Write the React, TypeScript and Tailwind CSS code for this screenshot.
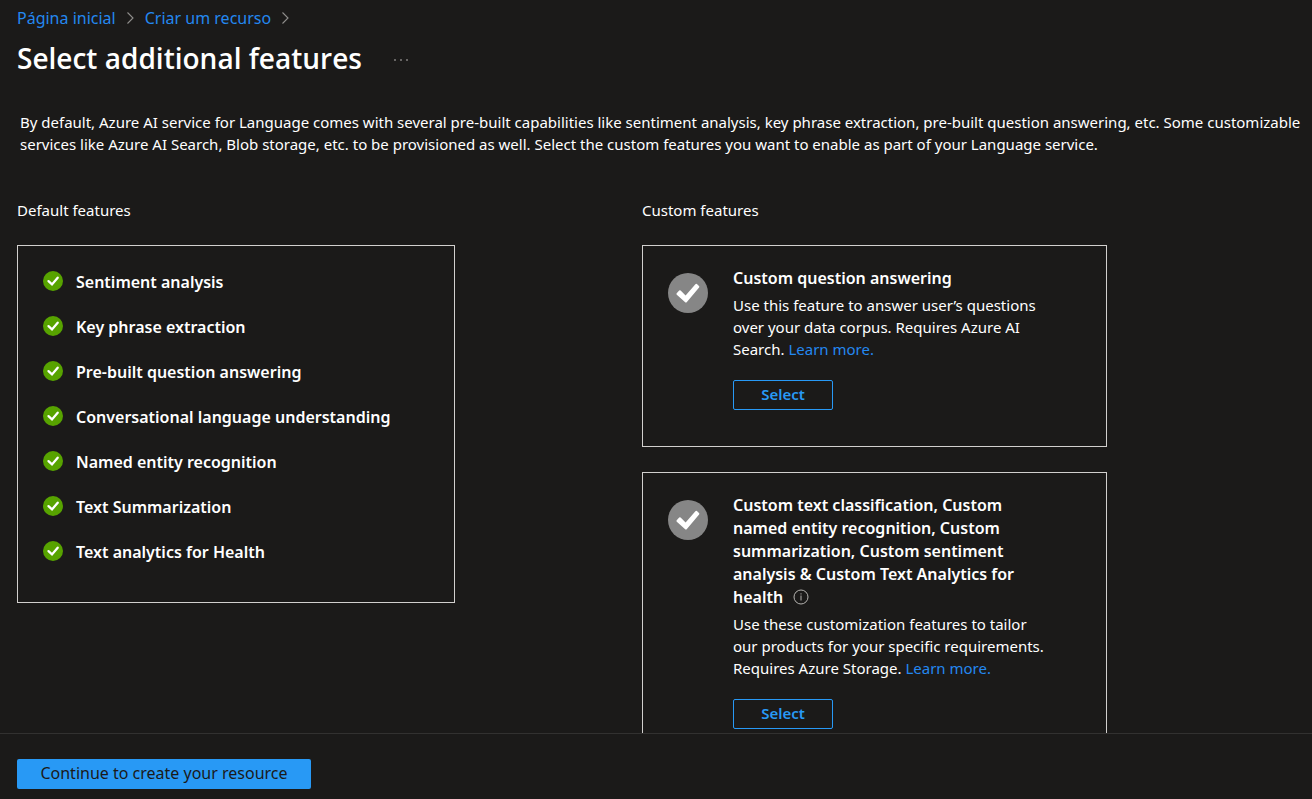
import type { ReactNode } from "react";

const defaultFeatures = [
  "Sentiment analysis",
  "Key phrase extraction",
  "Pre-built question answering",
  "Conversational language understanding",
  "Named entity recognition",
  "Text Summarization",
  "Text analytics for Health",
];

function Chevron() {
  return (
    <svg aria-hidden="true" viewBox="0 0 7 12" className="h-3 w-[7px] shrink-0" fill="none" stroke="#8f8e8c" strokeWidth="1.1">
      <path d="M.5.5 6 6 .5 11.5" />
    </svg>
  );
}

function GreenCheck() {
  return (
    <svg aria-hidden="true" viewBox="0 0 20 20" className="mt-px size-5 shrink-0">
      <circle cx="10" cy="10" r="10" fill="#57a300" />
      <path d="M5.5 10.1 9 13.4 14.7 6.7" fill="none" stroke="#fff" strokeWidth="2.3" strokeLinecap="round" />
    </svg>
  );
}

function GrayCheck() {
  return (
    <svg aria-hidden="true" viewBox="0 0 40 40" className="size-10 shrink-0">
      <circle cx="20" cy="20" r="20" fill="#868686" />
      <path
        d="M8.7 20.3 11.2 17.6Q11.9 17 12.6 17.6L17.6 22.6 27.4 11.2Q28.1 10.4 28.9 11.1L31 13Q31.7 13.6 31.1 14.4L18.9 29.1Q17.9 30.1 16.9 29.1L8.8 21.7Q8 21 8.7 20.3Z"
        fill="#fff"
      />
    </svg>
  );
}

function InfoIcon() {
  return (
    <svg aria-hidden="true" viewBox="0 0 16 16" className="size-4" fill="none" stroke="#b5b3b0">
      <circle cx="8" cy="8" r="7" />
      <path d="M8 6.5v5M8 4.3v1.2" />
    </svg>
  );
}

function FeatureCard({ title, children }: { title: ReactNode; children: ReactNode }) {
  return (
    <article className="flex gap-[25px] border border-[#d2d0ce] px-[25px] pt-[21px] pb-9">
      <div className="pt-[6px]">
        <GrayCheck />
      </div>
      <div className="w-[318px]">
        <h3 className="text-base leading-[23px] font-semibold">{title}</h3>
        <p className="mt-1 text-[15px] leading-[22px]">
          {children}{" "}
          <a href="#learn-more" className="text-[#2488f0] hover:underline">
            Learn more.
          </a>
        </p>
        <button
          type="button"
          className="mt-5 h-[30px] w-[100px] rounded-xs border border-[#2899f5] pb-[2px] text-[15px] leading-5 font-semibold text-[#2899f5]"
        >
          Select
        </button>
      </div>
    </article>
  );
}

export default function App() {
  return (
    <div className="flex h-screen flex-col bg-[#1b1a19] font-['Noto_Sans','Open_Sans',sans-serif] text-white">
      <main className="min-h-0 flex-1 overflow-x-hidden overflow-y-auto pl-[17px] [scrollbar-width:none]">
        <nav aria-label="Breadcrumb" className="flex items-center gap-[11px] pt-[6px] text-base leading-6 text-[#2488f0]">
          <a href="#home">Página inicial</a>
          <Chevron />
          <a href="#create">Criar um recurso</a>
          <Chevron />
        </nav>
        <header className="mt-2 flex items-center gap-8">
          <h1 className="font-['Open_Sans','Noto_Sans',sans-serif] text-[28px] leading-10 font-semibold">
            Select additional features
          </h1>
          <button type="button" aria-label="More options" className="flex h-6 items-center pt-1">
            <svg viewBox="0 0 14 2" className="h-[2px] w-[14px]" fill="#c8c6c4">
              <circle cx="1" cy="1" r=".8" />
              <circle cx="7" cy="1" r=".8" />
              <circle cx="13" cy="1" r=".8" />
            </svg>
          </button>
        </header>
        <p className="mt-[33px] pl-[3px] text-[15px] leading-[22px] whitespace-nowrap">
          By default, Azure AI service for Language comes with several pre-built capabilities like sentiment analysis, key
          phrase extraction, pre-built question answering, etc. Some customizable
          <br />
          services like Azure AI Search, Blob storage, etc. to be provisioned as well. Select the custom features you want
          to enable as part of your Language service.
        </p>
        <div className="mt-11 grid grid-cols-[minmax(0,625px)_minmax(0,465px)] items-start">
          <section>
            <h2 className="text-[15px] leading-[22px]">Default features</h2>
            <ul className="mt-6 flex max-w-[438px] flex-col gap-5 border border-[#d2d0ce] px-[25px] pt-6 pb-[37px]">
              {defaultFeatures.map((feature) => (
                <li key={feature} className="flex items-start gap-[13px] text-base leading-[25px] font-semibold">
                  <GreenCheck />
                  {feature}
                </li>
              ))}
            </ul>
          </section>
          <section>
            <h2 className="text-[15px] leading-[22px]">Custom features</h2>
            <div className="mt-6 flex flex-col gap-[25px]">
              <FeatureCard title="Custom question answering">
                Use this feature to answer user’s questions over your data corpus. Requires Azure AI Search.
              </FeatureCard>
              <FeatureCard
                title={
                  <>
                    Custom text classification, Custom named entity recognition, Custom summarization, Custom sentiment
                    analysis &amp; Custom Text Analytics for health{" "}
                    <button type="button" aria-label="More information" className="ml-1.5 inline-flex align-[-2px]">
                      <InfoIcon />
                    </button>
                  </>
                }
              >
                Use these customization features to tailor our products for your specific requirements. Requires Azure
                Storage.
              </FeatureCard>
            </div>
          </section>
        </div>
      </main>
      <footer className="border-t border-[#323130] px-[17px] pt-[25px] pb-[10px]">
        <button
          type="button"
          className="h-[30px] w-[294px] rounded-xs bg-[#2899f5] pb-[2px] text-base leading-5 text-[#1b1a19]"
        >
          Continue to create your resource
        </button>
      </footer>
    </div>
  );
}
